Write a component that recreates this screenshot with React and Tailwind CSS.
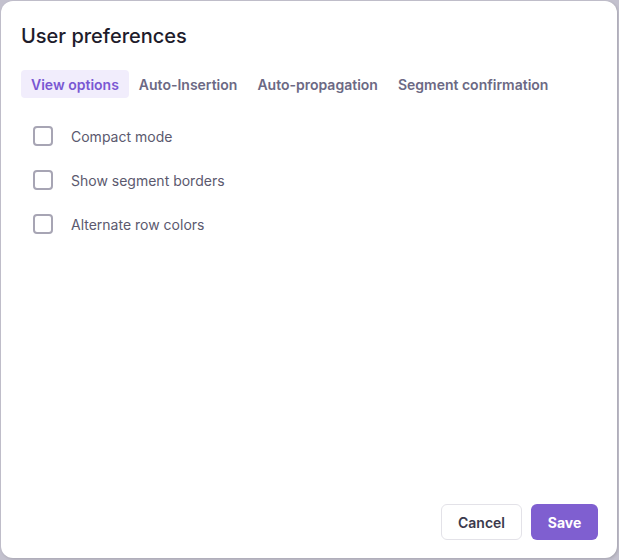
import { useState } from 'react'

const tabs = ['View options', 'Auto-Insertion', 'Auto-propagation', 'Segment confirmation']
const options = ['Compact mode', 'Show segment borders', 'Alternate row colors']

function Checkbox({ label, checked, onChange }) {
  return (
    <label className="flex h-[44px] cursor-pointer items-center gap-[18px] pl-[12px]">
      <span
        className={`flex h-[20px] w-[20px] items-center justify-center rounded-[4px] border-2 ${
          checked ? 'border-[#7f5fd0] bg-[#7f5fd0]' : 'border-[#a7a5b4] bg-white'
        }`}
      >
        {checked && (
          <svg viewBox="0 0 16 16" className="h-3 w-3" fill="none" stroke="white" strokeWidth="2.5">
            <path d="M3 8.5l3 3 7-7" />
          </svg>
        )}
      </span>
      <input type="checkbox" className="hidden" checked={checked} onChange={onChange} />
      <span className="text-[14px] text-[#5b596e]">{label}</span>
    </label>
  )
}

export default function App() {
  const [active, setActive] = useState(0)
  const [checked, setChecked] = useState([false, false, false])

  return (
    <div
      className="h-[560px] w-[619px] bg-[#c3c1ce] pl-[1px] pt-[1px]"
      style={{ fontFamily: 'Inter, "Noto Sans", sans-serif' }}
    >
      <div className="flex h-[557px] w-[616px] flex-col rounded-[12px] bg-white pl-[20px] pr-[19px] pb-[18px] shadow-[1px_1px_3px_rgba(0,0,0,0.15)]">
        <h2 className="pt-[21px] text-[20px] leading-[28px] font-medium text-[#1e1c2b]">User preferences</h2>
        <div className="mt-[20px] flex">
          {tabs.map((tab, i) => (
            <button
              key={tab}
              onClick={() => setActive(i)}
              className={`h-[28px] rounded-[4px] px-[10px] text-[14px] font-semibold ${
                active === i ? 'bg-[#f1edfc] text-[#7a58d3]' : 'text-[#6c6984]'
              }`}
            >
              {tab}
            </button>
          ))}
        </div>
        <div className="mt-[16px] flex flex-col">
          {options.map((opt, i) => (
            <Checkbox
              key={opt}
              label={opt}
              checked={checked[i]}
              onChange={() => setChecked(checked.map((c, j) => (j === i ? !c : c)))}
            />
          ))}
        </div>
        <div className="mt-auto flex justify-end gap-[9px]">
          <button className="h-[36px] w-[81px] rounded-[6px] border border-[#e3e2e8] bg-white text-[14px] font-semibold text-[#3b394c]">
            Cancel
          </button>
          <button className="h-[36px] w-[67px] rounded-[6px] bg-[#7f5fd0] text-[14px] font-bold text-white">
            Save
          </button>
        </div>
      </div>
    </div>
  )
}
